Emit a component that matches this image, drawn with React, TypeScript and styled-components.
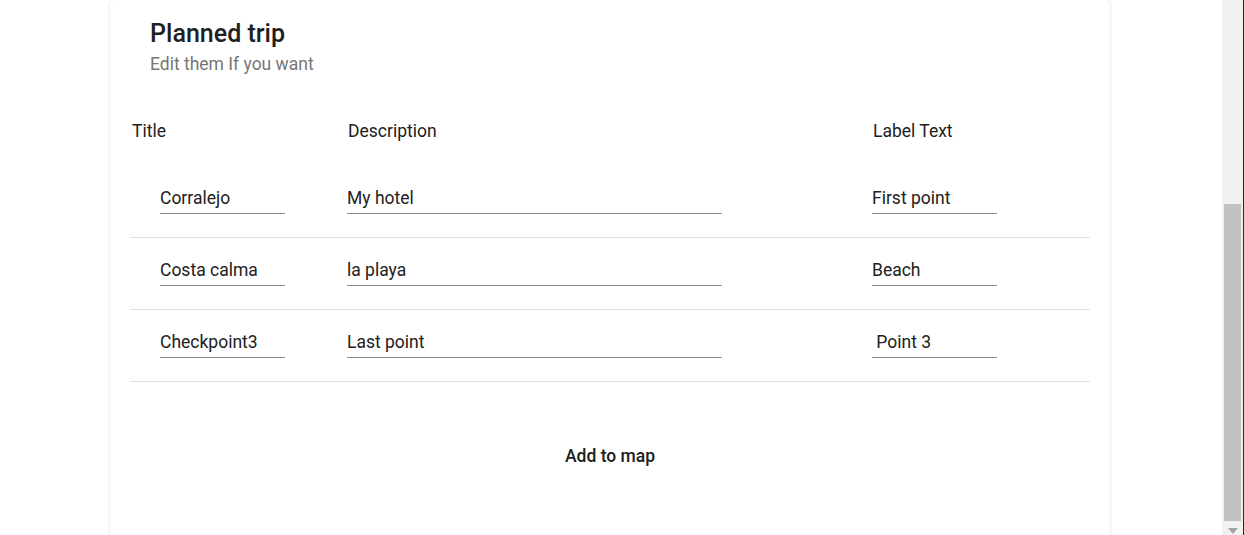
import React from "react";
import styled, { createGlobalStyle } from "styled-components";

const Global = createGlobalStyle`
  html, body { margin: 0; padding: 0; background: #fff; overflow: hidden; }
  body { font-family: Roboto, "Liberation Sans", Arial, sans-serif; color: #212121; }
  * { box-sizing: border-box; }
`;

const Window = styled.div`
  display: flex;
  width: 1244px;
  height: 535px;
  overflow: hidden;
`;

const Page = styled.main`
  flex: 1;
  min-width: 0;
  height: 535px;
  overflow: hidden;
`;

const Card = styled.section`
  width: 1000px;
  margin: 0 0 0 110px;
  height: 560px;
  background: #fff;
  border-radius: 4px;
  box-shadow: 0 1px 3px rgba(0, 0, 0, 0.14), 0 0 1px rgba(0, 0, 0, 0.12);
  padding: 0 20px;
`;

const CardHeader = styled.header`
  padding: 18px 20px 0;
  height: 90px;
`;

const Title = styled.h2`
  margin: 0;
  font-family: "Roboto Medium", Roboto, "Liberation Sans", Arial, sans-serif;
  font-size: 25px;
  line-height: 32px;
  font-weight: 500;
  color: #1f1f1f;
`;

const Subtitle = styled.p`
  margin: 2px 0 0;
  font-size: 17.5px;
  line-height: 24px;
  color: #767676;
`;

const Table = styled.div`
  margin-top: 13px;
`;

const Row = styled.div<{ $head?: boolean }>`
  display: grid;
  grid-template-columns: 217px 525px 1fr;
  align-items: ${(p) => (p.$head ? "center" : "end")};
  height: ${(p) => (p.$head ? "56px" : "72px")};
  margin-bottom: ${(p) => (p.$head ? "7px" : "0")};
  padding-bottom: ${(p) => (p.$head ? "0" : "23px")};
  border-bottom: ${(p) => (p.$head ? "none" : "1px solid #e0e0e0")};
`;

const HeadCell = styled.div<{ $pad: number }>`
  padding-left: ${(p) => p.$pad}px;
  font-size: 17.5px;
  line-height: 24px;
  color: #212121;
`;

const Cell = styled.div<{ $pad: number }>`
  padding-left: ${(p) => p.$pad}px;
`;

const Field = styled.input<{ $w: number }>`
  display: block;
  width: ${(p) => p.$w}px;
  height: 32px;
  border: none;
  border-bottom: 1px solid #8f8f8f;
  padding: 1px 0 0;
  margin: 0;
  background: transparent;
  font-family: Roboto, "Liberation Sans", Arial, sans-serif;
  font-size: 17.5px;
  color: #212121;
  outline: none;
`;

const Actions = styled.div`
  display: flex;
  justify-content: center;
  padding-top: 56px;
`;

const Button = styled.button`
  height: 36px;
  padding: 0 16px;
  border: none;
  background: transparent;
  font-family: "Roboto Medium", Roboto, "Liberation Sans", Arial, sans-serif;
  font-size: 17.5px;
  font-weight: 500;
  color: #212121;
  cursor: pointer;
`;

const Scrollbar = styled.div`
  width: 22px;
  height: 535px;
  display: flex;
  flex-direction: column;
  background: #f1f1f1;
  border-right: 1px solid #2a2a2a;
`;

const Track = styled.div`
  flex: 1;
  display: flex;
  flex-direction: column;
  padding: 204px 2px 0 2px;
`;

const Thumb = styled.div`
  flex: 1;
  background: #c1c1c1;
`;

const ArrowBox = styled.div`
  height: 14px;
  display: flex;
  justify-content: center;
  align-items: flex-end;
  padding-bottom: 1px;
`;

const rows = [
  { title: "Corralejo", desc: "My hotel", label: "First point" },
  { title: "Costa calma", desc: "la playa", label: "Beach" },
  { title: "Checkpoint3", desc: "Last point", label: " Point 3" },
];

export default function App() {
  return (
    <>
      <Global />
      <Window>
        <Page>
          <Card>
            <CardHeader>
              <Title>Planned trip</Title>
              <Subtitle>Edit them If you want</Subtitle>
            </CardHeader>
            <Table>
              <Row $head>
                <HeadCell $pad={2}>Title</HeadCell>
                <HeadCell $pad={1}>Description</HeadCell>
                <HeadCell $pad={1}>Label Text</HeadCell>
              </Row>
              {rows.map((r) => (
                <Row key={r.title}>
                  <Cell $pad={30}>
                    <Field $w={125} defaultValue={r.title} />
                  </Cell>
                  <Cell $pad={0}>
                    <Field $w={375} defaultValue={r.desc} />
                  </Cell>
                  <Cell $pad={0}>
                    <Field $w={125} defaultValue={r.label} />
                  </Cell>
                </Row>
              ))}
            </Table>
            <Actions>
              <Button>Add to map</Button>
            </Actions>
          </Card>
        </Page>
        <Scrollbar>
          <Track>
            <Thumb />
          </Track>
          <ArrowBox>
            <svg width="10" height="6" viewBox="0 0 10 6">
              <path d="M0 0 H10 L5 6 Z" fill="#a3a3a3" />
            </svg>
          </ArrowBox>
        </Scrollbar>
      </Window>
    </>
  );
}
